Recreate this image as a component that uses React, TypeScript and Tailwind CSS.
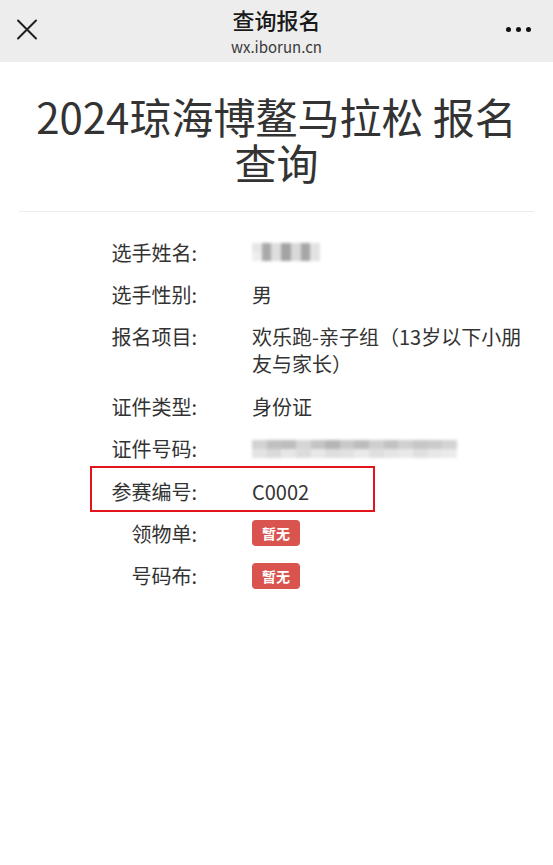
import React from "react";

const font = { fontFamily: '"Noto Sans CJK SC", "Noto Sans", sans-serif' };

// pixelated shades for the masked values
const nameCells = ["#e6e6e6", "#a9a9a9", "#dedede", "#a3a3a3", "#d9d9d9", "#a6a6a6", "#e2e2e2"];
const idTop = ["#d2d2d2", "#c0c0c0", "#bdbdbd", "#d6d6d6", "#c4c4c4", "#b5b5b5", "#c9c9c9", "#bcbcbc", "#cfcfcf", "#c2c2c2", "#d0d0d0", "#c6c6c6", "#cbcbcb", "#d3d3d3"];
const idBottom = ["#e3e3e3", "#dadada", "#e6e6e6", "#dcdcdc", "#e8e8e8", "#dedede", "#e1e1e1", "#eaeaea", "#dfdfdf", "#e5e5e5", "#e9e9e9", "#e0e0e0", "#e7e7e7", "#ebebeb"];

function Masked({ cells, w }: { cells: string[][]; w: number }) {
    return (
        <span className="inline-flex flex-col blur-[1.5px]" style={{ width: w }}>
            {cells.map((row, i) => (
                <span key={i} className="flex h-[9px]">
                    {row.map((c, j) => (
                        <span key={j} className="flex-1" style={{ background: c }} />
                    ))}
                </span>
            ))}
        </span>
    );
}

function Badge() {
    return (
        <span className="inline-flex h-[26px] items-center rounded-[4px] bg-[#d9534f] px-[10px] text-[14px] font-bold leading-none text-white">
            暂无
        </span>
    );
}

type Row = { label: string; value: React.ReactNode; boxed?: boolean };

const rows: Row[] = [
    { label: "选手姓名:", value: <Masked cells={[nameCells, nameCells.map((c) => (c === "#e6e6e6" ? "#eeeeee" : c))]} w={68} /> },
    { label: "选手性别:", value: "男" },
    { label: "报名项目:", value: "欢乐跑-亲子组（13岁以下小朋友与家长）" },
    { label: "证件类型:", value: "身份证" },
    { label: "证件号码:", value: <Masked cells={[idTop, idBottom]} w={205} /> },
    { label: "参赛编号:", value: "C0002", boxed: true },
    { label: "领物单:", value: <Badge /> },
    { label: "号码布:", value: <Badge /> },
];

export default function App() {
    return (
        <div className="min-h-[865px] w-[553px] bg-white text-[#333]" style={font}>
            <header className="relative flex h-[62px] flex-col items-center bg-[#ededed]">
                <svg className="absolute left-[16px] top-[19px]" width="22" height="21" viewBox="0 0 22 21">
                    <path d="M2 1.5 L20 19.5 M20 1.5 L2 19.5" stroke="#1f1f1f" strokeWidth="2" strokeLinecap="round" />
                </svg>
                <span className="mt-[5px] text-[22px] font-medium leading-[28px] text-[#1a1a1a]">查询报名</span>
                <span className="mt-[3px] text-[15px] leading-[22px] text-[#3a3a3a]">wx.iborun.cn</span>
                <div className="absolute right-[22px] top-[27px] flex gap-[5px]">
                    <span className="size-[5px] rounded-full bg-[#111]" />
                    <span className="size-[5px] rounded-full bg-[#111]" />
                    <span className="size-[5px] rounded-full bg-[#111]" />
                </div>
            </header>

            <h1 className="px-[20px] pt-[31px] text-center text-[42px] font-normal leading-[46px] text-[#333]">
                2024琼海博鳌马拉松 报名查询
            </h1>

            <div className="mx-[19px] mt-[26px] h-px bg-[#ececec]" />

            <div className="mt-[19px] flex flex-col pl-[77px]">
                {rows.map((r) => (
                    <div key={r.label} className="relative flex py-[7.7px] text-[20px] leading-[27px]">
                        {r.boxed && (
                            <span className="pointer-events-none absolute left-[13px] top-[-4px] h-[46px] w-[285px] border-2 border-[#e3141b]" />
                        )}
                        <div className="w-[120px] shrink-0 text-right">{r.label}</div>
                        <div className="ml-[55px] flex min-h-[27px] w-[275px] items-center">{r.value}</div>
                    </div>
                ))}
            </div>
        </div>
    );
}
